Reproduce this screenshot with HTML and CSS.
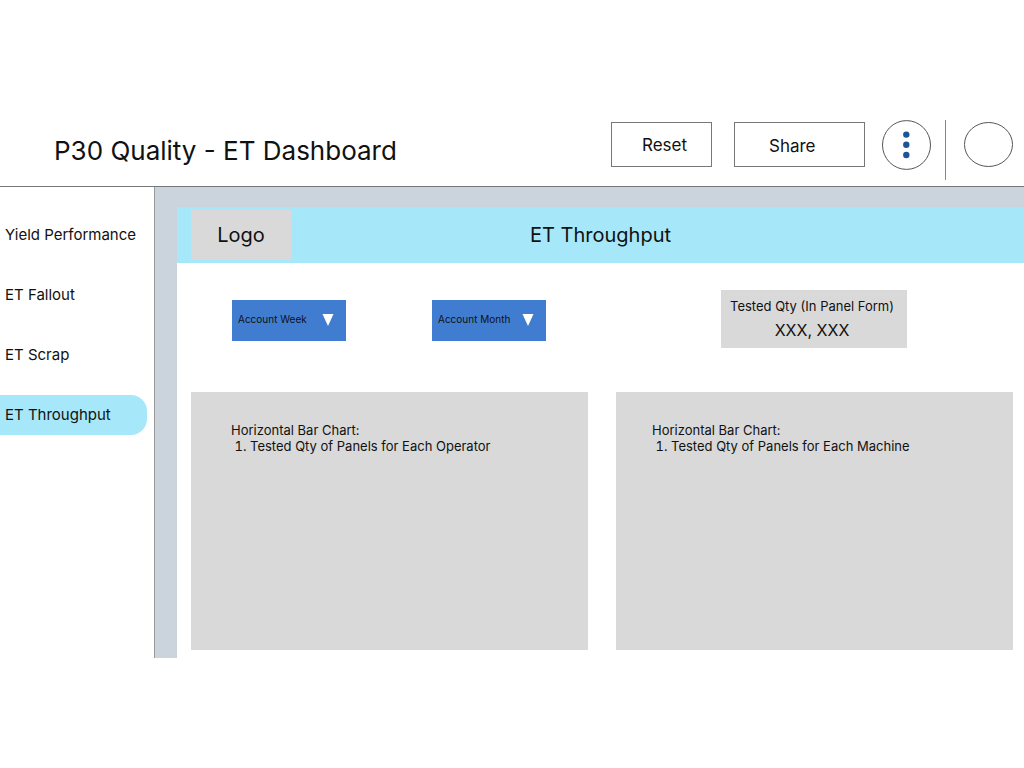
FILE: index.html
```html
<!DOCTYPE html>
<html lang="en">
<head>
<meta charset="utf-8">
<meta name="viewport" content="width=device-width, initial-scale=1">
<title>P30 Quality - ET Dashboard</title>
<link rel="stylesheet" href="styles.css">
</head>
<body>
<header class="topbar">
  <h1 class="topbar-title">P30 Quality - ET Dashboard</h1>
  <button class="btn btn-reset" type="button">Reset</button>
  <button class="btn btn-share" type="button">Share</button>
  <button class="menu-btn" type="button" aria-label="More options">
    <svg width="49" height="50" viewBox="0 0 49 50" aria-hidden="true">
      <ellipse cx="24.5" cy="25" rx="24" ry="24.4" fill="none" stroke="#555" stroke-width="1"/>
      <circle cx="24.3" cy="14.6" r="3.2" fill="#1b5597"/>
      <circle cx="24.3" cy="24.8" r="3.2" fill="#1b5597"/>
      <circle cx="24.3" cy="35" r="3.2" fill="#1b5597"/>
    </svg>
  </button>
  <div class="divider"></div>
  <button class="avatar" type="button" aria-label="Profile">
    <svg width="49" height="45" viewBox="0 0 49 45" aria-hidden="true">
      <ellipse cx="24.5" cy="22.5" rx="24" ry="22" fill="none" stroke="#555" stroke-width="1"/>
    </svg>
  </button>
</header>
<div class="layout">
  <nav class="sidebar">
    <a class="nav-link" href="#yield">Yield Performance</a>
    <a class="nav-link" href="#fallout">ET Fallout</a>
    <a class="nav-link" href="#scrap">ET Scrap</a>
    <a class="nav-link active" href="#throughput" aria-current="page">ET Throughput</a>
  </nav>
  <main class="main">
    <div class="banner">
      <div class="logo">Logo</div>
      <h2 class="banner-title">ET Throughput</h2>
    </div>
    <div class="panel">
      <div class="filters">
        <div class="filter">
          <select class="filter-select" aria-label="Account Week"><option>Account Week</option></select>
          <svg class="filter-arrow" width="12" height="12" viewBox="0 0 12 12" aria-hidden="true"><path d="M.5 0h11L6 12z" fill="#fff"/></svg>
        </div>
        <div class="filter">
          <select class="filter-select" aria-label="Account Month"><option>Account Month</option></select>
          <svg class="filter-arrow" width="12" height="12" viewBox="0 0 12 12" aria-hidden="true"><path d="M.5 0h11L6 12z" fill="#fff"/></svg>
        </div>
        <div class="metric">
          <div class="metric-label">Tested Qty (In Panel Form)</div>
          <div class="metric-value">XXX, XXX</div>
        </div>
      </div>
      <div class="charts">
        <section class="chart">
          <p class="chart-title">Horizontal Bar Chart:</p>
          <ol class="chart-list"><li>Tested Qty of Panels for Each Operator</li></ol>
        </section>
        <section class="chart chart-machine">
          <p class="chart-title">Horizontal Bar Chart:</p>
          <ol class="chart-list"><li>Tested Qty of Panels for Each Machine</li></ol>
        </section>
      </div>
    </div>
  </main>
</div>
</body>
</html>
```
FILE: styles.css
```css
* {
  box-sizing: border-box;
}

body {
  margin: 0;
  padding-top: 120px;
  background: #fff;
  color: #111;
  font-family: Inter, "Liberation Sans", sans-serif;
}

h1, h2, p, ol {
  margin: 0;
  padding: 0;
  font-weight: 400;
}

button {
  padding: 0;
  border: 0;
  background: none;
  color: inherit;
  font-family: inherit;
}

svg {
  display: block;
}

.topbar {
  display: flex;
  align-items: flex-start;
  padding: 0 11px 4px 54px;
  border-bottom: 1px solid #777;
}

.topbar-title {
  margin-right: auto;
  font-size: 26px;
  line-height: 62px;
}

.btn {
  height: 45px;
  margin-top: 2px;
  border: 1px solid #777;
  font-size: 17px;
  text-align: left;
}

.btn-reset {
  width: 101px;
  margin-right: 22px;
  padding-left: 30px;
}

.btn-share {
  width: 131px;
  margin-right: 17px;
  padding: 2px 0 0 34px;
}

.divider {
  width: 1px;
  height: 60px;
  margin: 0 18px 0 14px;
  background: #888;
}

.avatar {
  margin-top: 2px;
}

.layout {
  display: flex;
}

.sidebar {
  display: flex;
  flex-direction: column;
  flex: 0 0 155px;
  gap: 20px;
  padding: 28px 7px 0 0;
  border-right: 1px solid #999;
}

.nav-link {
  padding-left: 5px;
  border-radius: 0 16px 16px 0;
  color: inherit;
  font-size: 15px;
  line-height: 40px;
  text-decoration: none;
}

.active {
  background: #a6e8f9;
}

.main {
  flex: 1;
  padding: 20px 0 0 22px;
  background: #cbd3dd;
}

.banner {
  display: grid;
  grid-template-columns: 1fr auto 1fr;
  align-items: center;
  padding: 3px 14px;
  background: #a6e8f9;
}

.logo {
  width: 100px;
  background: #d9d9d9;
  font-size: 20px;
  line-height: 50px;
  text-align: center;
}

.banner-title {
  font-size: 20px;
}

.panel {
  padding: 27px 11px 8px 14px;
  background: #fff;
}

.filters {
  display: flex;
  align-items: flex-start;
  padding: 0 106px 0 41px;
}

.filter {
  position: relative;
  width: 114px;
  margin: 10px 86px 0 0;
}

.filter-select {
  display: block;
  width: 100%;
  height: 41px;
  padding: 0 6px 3px;
  border: 0;
  border-radius: 0;
  appearance: none;
  background: #407dd1;
  color: #111;
  font-family: inherit;
  font-size: 10px;
}

.filter-arrow {
  position: absolute;
  top: 14px;
  right: 12px;
  pointer-events: none;
}

.metric {
  width: 186px;
  margin-left: auto;
  padding: 4px 4px 6px 0;
  background: #d9d9d9;
  text-align: center;
}

.metric-label {
  font-size: 13px;
  line-height: 24px;
}

.metric-value {
  font-size: 16px;
  line-height: 24px;
}

.charts {
  display: grid;
  grid-template-columns: 1fr 1fr;
  gap: 28px;
  margin-top: 44px;
}

.chart {
  min-height: 258px;
  padding: 30px 36px 30px 40px;
  background: #d9d9d9;
  font-size: 13px;
  line-height: 16px;
}

.chart-machine {
  padding-left: 36px;
}

.chart-list {
  padding-left: 19px;
}
```
